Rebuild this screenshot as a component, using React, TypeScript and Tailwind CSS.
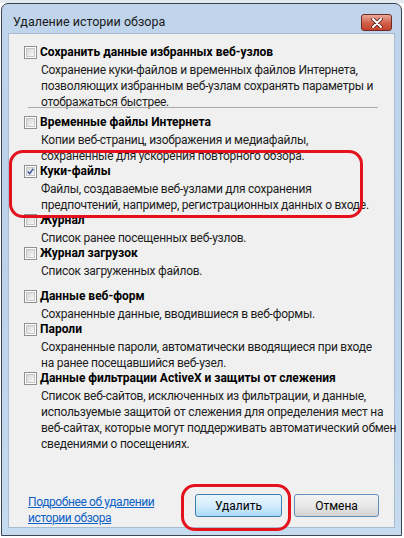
import React from 'react'

// ─────────────────────────────────────────────
// Options shown in the "delete browsing history" dialog
// ─────────────────────────────────────────────

interface HistoryOption {
  id: string
  title: string
  lines: string[]
  checked?: boolean
  extraTop?: boolean
}

const OPTIONS: HistoryOption[] = [
  {
    id: 'temp',
    title: 'Временные файлы Интернета',
    lines: ['Копии веб-страниц, изображения и медиафайлы,', 'сохраненные для ускорения повторного обзора.'],
  },
  {
    id: 'cookies',
    title: 'Куки-файлы',
    lines: ['Файлы, создаваемые веб-узлами для сохранения', 'предпочтений, например, регистрационных данных о входе.'],
    checked: true,
  },
  {
    id: 'history',
    title: 'Журнал',
    lines: ['Список ранее посещенных веб-узлов.'],
  },
  {
    id: 'downloads',
    title: 'Журнал загрузок',
    lines: ['Список загруженных файлов.'],
  },
  {
    id: 'forms',
    title: 'Данные веб-форм',
    lines: ['Сохраненные данные, вводившиеся в веб-формы.'],
    extraTop: true,
  },
  {
    id: 'passwords',
    title: 'Пароли',
    lines: ['Сохраненные пароли, автоматически вводящиеся при входе', 'на ранее посещавшийся веб-узел.'],
  },
  {
    id: 'activex',
    title: 'Данные фильтрации ActiveX и защиты от слежения',
    lines: [
      'Список веб-сайтов, исключенных из фильтрации, и данные,',
      'используемые защитой от слежения для определения мест на',
      'веб-сайтах, которые могут поддерживать автоматический обмен',
      'сведениями о посещениях.',
    ],
  },
]

const FONT = { fontFamily: 'Roboto, "Liberation Sans", Arial, sans-serif' }

function Checkbox({ checked }: { checked?: boolean }) {
  return (
    <div className="w-[13px] h-[13px] shrink-0 border border-[#8e8f8f] bg-white p-[1px]">
      <div className="w-full h-full border border-[#c6c6c6] bg-gradient-to-br from-[#d6d6d6] to-[#f8f8f8] flex items-center justify-center">
        {checked && (
          <svg width="9" height="9" viewBox="0 0 9 9">
            <path d="M1 4.5 L3.5 7.2 L8 1" fill="none" stroke="#3c56a0" strokeWidth="1.8" />
          </svg>
        )}
      </div>
    </div>
  )
}

function Option({ title, lines, checked }: { title: string; lines: string[]; checked?: boolean }) {
  return (
    <div>
      <div className="flex items-center gap-[3px] h-[16px]">
        <Checkbox checked={checked} />
        <span className="font-bold text-[12px] leading-[16px] text-black">{title}</span>
      </div>
      <div className="mt-[2px] pl-[17px] text-[12px] leading-[16px] tracking-[-0.25px] text-[#1c1c1c]">
        {lines.map((l) => (
          <div key={l} className="whitespace-nowrap">{l}</div>
        ))}
      </div>
    </div>
  )
}

export default function App() {
  return (
    <div className="w-[404px] h-[538px] bg-white overflow-hidden relative" style={FONT}>
      {/* strip of desktop above the window */}
      <div className="h-[3px] bg-[#e4e9ef]" />

      {/* ── Window ── */}
      <div className="ml-[1px] w-[401px] h-[533px] rounded-t-[7px] border border-[#3a4452] bg-gradient-to-b from-[#c0d5eb] via-[#bcd2ea] to-[#c6dbef] flex flex-col">
        {/* title bar */}
        <div className="h-[29px] flex items-center justify-between pl-[11px] pr-[9px] shrink-0">
          <span className="text-[12.5px] text-[#1a1a1a] mt-[8px]">Удаление истории обзора</span>
          <div className="mt-[8px] w-[31px] h-[17px] rounded-[3px] border border-[#6e2a20] bg-gradient-to-b from-[#e9a99a] via-[#d2624c] to-[#c5412c] flex items-center justify-center">
            <svg width="12" height="10" viewBox="0 0 12 10">
              <path d="M2 1 L10 9 M10 1 L2 9" stroke="#5a2018" strokeWidth="3.6" strokeLinecap="round" />
              <path d="M2 1 L10 9 M10 1 L2 9" stroke="#ffffff" strokeWidth="2" strokeLinecap="round" />
            </svg>
          </div>
        </div>

        {/* content */}
        <div className="mx-[6px] h-[495px] border border-[#a8bbd0] bg-[#f0f0f0] flex flex-col pt-[10px] pl-[15px] pr-[12px]">
          <Option
            title="Сохранить данные избранных веб-узлов"
            lines={[
              'Сохранение куки-файлов и временных файлов Интернета,',
              'позволяющих избранным веб-узлам сохранять параметры и',
              'отображаться быстрее.',
            ]}
          />
          <div className="-mt-[3px] ml-[4px] w-[350px] h-[1px] bg-[#a9a9a9]" />

          <div className="mt-[6px] flex flex-col">
            {OPTIONS.map((o) => (
              <div key={o.id} className={o.extraTop ? 'mt-[10px] -mb-[1px]' : '-mb-[1px]'}>
                <Option title={o.title} lines={o.lines} checked={o.checked} />
              </div>
            ))}
          </div>

          {/* bottom row */}
          <div className="mt-auto mb-[1px] flex items-start">
            <div className="ml-[4px] text-[12px] leading-[16px] tracking-[-0.4px] text-[#0c62c7] underline">
              <div>Подробнее об удалении</div>
              <div>истории обзора</div>
            </div>
            <button className="ml-auto w-[87px] h-[23px] rounded-[3px] border border-[#3c7fb1] bg-gradient-to-b from-[#eaf6fd] via-[#d4edfc] to-[#a9daf5] text-[12px] text-black">
              Удалить
            </button>
            <button className="ml-[12px] mr-[3px] w-[85px] h-[23px] rounded-[3px] border border-[#5f8fb8] bg-gradient-to-b from-[#f4f4f4] via-[#e8e8e8] to-[#d3d3d3] text-[12px] text-black">
              Отмена
            </button>
          </div>
        </div>
      </div>

      {/* red highlight rings */}
      <div className="absolute left-[9px] top-[150px] w-[354px] h-[68px] rounded-[14px] border-[3px] border-[#e3121c]" />
      <div className="absolute left-[181px] top-[484px] w-[110px] h-[47px] rounded-[14px] border-[3px] border-[#e3121c]" />
    </div>
  )
}
